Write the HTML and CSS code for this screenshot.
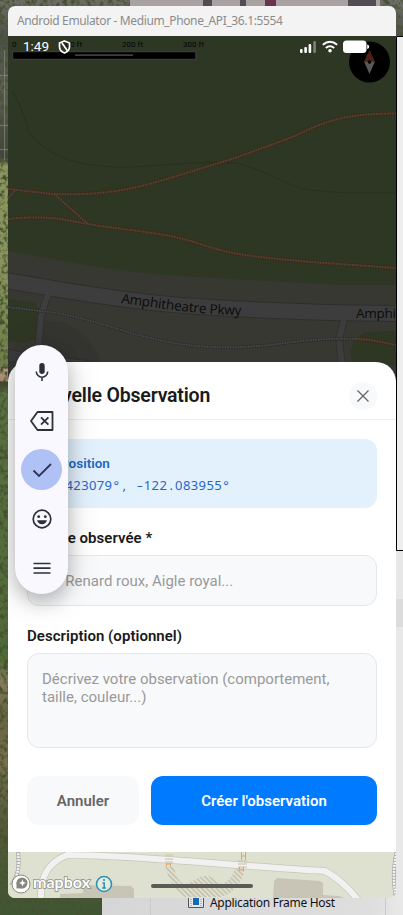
FILE: index.html
```
<!DOCTYPE html>
<html lang="fr">
<head>
<meta charset="utf-8">
<title>Nouvelle Observation</title>
<link rel="stylesheet" href="styles.css">
</head>
<body>
<div class="desktop">
  <svg class="wallpaper" width="403" height="915" viewBox="0 0 403 915" aria-hidden="true">
    <defs>
      <linearGradient id="photo" x1="0" y1="0" x2="0" y2="915" gradientUnits="userSpaceOnUse">
        <stop offset="0" stop-color="#6c6e66"/><stop offset=".04" stop-color="#4d5149"/>
        <stop offset=".1" stop-color="#5a6053"/><stop offset=".172" stop-color="#3e443a"/>
        <stop offset=".182" stop-color="#8c9660"/><stop offset=".3" stop-color="#86935a"/>
        <stop offset=".4" stop-color="#6e7d47"/><stop offset=".402" stop-color="#b89d82"/>
        <stop offset=".416" stop-color="#a5886b"/><stop offset=".418" stop-color="#353b26"/>
        <stop offset=".43" stop-color="#587040"/><stop offset=".72" stop-color="#4f6b35"/>
        <stop offset=".745" stop-color="#857c59"/><stop offset=".78" stop-color="#686440"/>
        <stop offset=".83" stop-color="#786f4d"/><stop offset=".9" stop-color="#565b38"/>
        <stop offset="1" stop-color="#3f5632"/>
      </linearGradient>
      <linearGradient id="panel" x1="102" x2="403" gradientUnits="userSpaceOnUse">
        <stop offset="0" stop-color="#d6d6d6"/><stop offset=".9" stop-color="#dedede"/><stop offset="1" stop-color="#e9e9e9"/>
      </linearGradient>
      <filter id="grass" x="0" y="0" width="100%" height="100%">
        <feTurbulence type="fractalNoise" baseFrequency=".25 .2" numOctaves="3" seed="7"/>
        <feColorMatrix values="0 0 0 0 .06  0 0 0 0 .08  0 0 0 0 .03  3.6 0 0 0 -1.6"/>
      </filter>
    </defs>
    <rect width="403" height="915" fill="url(#photo)"/>
    <rect width="403" height="915" filter="url(#grass)"/>
    <path fill="#aaa1a1" d="M130 0h250v7H130z"/>
    <path fill="#514d53" d="M203 0h9v7h-9zM240 0h6v7h-6zM348 0h28v7h-28z"/>
    <path fill="#6b344c" d="M265 0h11v7h-11z"/>
    <path stroke="#928e86" stroke-opacity=".6" d="M4.500 50v110M0 75.500h8M0 125.500h8M0 149.500h8"/>
    <path fill="#efeeef" d="M396 36h7v514h-7z"/>
    <path fill="#e7e7e7" d="M396 551h7v48h-7z"/>
    <path fill="#dcdcdc" d="M396 599h7v28h-7z"/>
    <path fill="#e8e8e8" d="M396 627h7v288h-7z"/>
    <path fill="none" stroke="#000" d="M403 36.500h-6.500v514h6.500"/>
    <path fill="url(#panel)" d="M102 890h301v25H102z"/>
    <path stroke="#c9c9c9" d="M150.500 890v25M385.500 890v25"/>
  </svg>

  <div class="task">
    <svg class="task-icon" width="16" height="14" viewBox="0 0 16 14"><path fill="#e8e8e8" stroke="#555" d="M.5.500h15v12H.5z"/><path fill="#1769b5" d="M5 1h6v9H5z"/><path stroke="#888" stroke-dasharray="1 1" d="M3 2v9M13 2v9"/></svg>
    <span>Application Frame Host</span>
  </div>

  <div class="window">
    <div class="titlebar">Android Emulator - Medium_Phone_API_36.1:5554</div>
    <div class="screen">
      <svg class="map" width="388" height="862" viewBox="8 36 388 862">
        <defs>
          <pattern id="hatch" width="3.500" height="3.500" patternUnits="userSpaceOnUse" patternTransform="rotate(-45)"><path stroke="#c3bca9" stroke-width="1.400" d="M1 0v4"/></pattern>
        </defs>
        <path fill="#2d3723" d="M8 36h388v340H8z"/>
        <path fill="#383833" d="M8 251C50 259 105 269 150 274L230 279 340 285H396V380H8z"/>
        <path fill="#2d3723" d="M8 299l27 4 5 8-2 28-18 4-12-2zM396 331l-31 1-11 9-4 11 4 14h42z"/>
        <path fill="#343430" d="M42 322q42-5 59 40H42z"/>
        <g fill="none" stroke="#283021"><path d="M12 90C25 113 25 125 31 135 50 157 73 164 113 167 150 168 195 160 236 163 267 170 290 188 310 190 345 194 370 193 396 193"/></g>
        <g fill="none" stroke="#2e2e2c" stroke-width="7.500">
          <path d="M48 294l-7 22-4 46M344 320l-5 18 3 28"/><path stroke-width="17" d="M8 281C70 291 130 302 190 306S310 313 396 313.500"/>
        </g>
        <g fill="none" stroke="#3d3d3e" stroke-width="6">
          <path d="M48 294l-7 22-4 46M344 320l-5 18 3 28"/><path stroke-width="15" d="M8 281C70 291 130 302 190 306S310 313 396 313.500"/>
        </g>
        <path fill="#3c3c3d" stroke="#2e2e2c" d="M8 349l22 5 70 8H8z"/>
        <g fill="none" stroke="#2d2d2d" stroke-width="3.200"><path d="M8 307l32 4C80 314 120 332 155 339 190 348 230 349 270 345 305 340 330 338 355 339"/></g>
        <g fill="none" stroke="#484748" stroke-width="1.800" stroke-dasharray="1.800 .8"><path d="M8 307l32 4C80 314 120 332 155 339 190 348 230 349 270 345 305 340 330 338 355 339"/></g>
        <g fill="none" stroke="#432a11" stroke-width="3.600">
          <path d="M8 189L53 194C105 196 135 188 160 181 190 172 215 164 235 158L290 138C330 119 345 114 396 113.500M8 198l8-8M54 194l34 30M8 219C25 217 45 217 60 219L88 224C130 231 165 232 200 244 235 256 260 257 310 262L396 268M355 339c15 0 25 3 41 6"/>
        </g>
        <g fill="none" stroke="#4a4343" stroke-width="2" stroke-dasharray="1.900 .8">
          <path d="M8 189L53 194C105 196 135 188 160 181 190 172 215 164 235 158L290 138C330 119 345 114 396 113.500M8 198l8-8M54 194l34 30M8 219C25 217 45 217 60 219L88 224C130 231 165 232 200 244 235 256 260 257 310 262L396 268M355 339c15 0 25 3 41 6"/>
        </g>
        <path id="pkwy" fill="none" d="M121 303C160 308 200 315 242 315"/>
        <text class="road"><textPath href="#pkwy" textLength="121">Amphitheatre Pkwy</textPath></text>
        <text class="road" x="356" y="318" textLength="40">Amphi</text>

        <path fill="#dfe1d0" d="M8 850h388v48H8z"/>
        <path fill="#c9c5b6" d="M60 898v-4l23-1v-8l48 1 3 3v9zM273 898l1-17 3-3 43 3 3 2v12l16 1 8 3z"/>
        <path fill="url(#hatch)" d="M165 866l9 1c2 10 5 15 11 18l17-9h7l13 8c8-4 12-9 13-17h10c-2 15-10 25-24 30h-36c-10-7-17-18-20-31z"/>
        <path fill="none" stroke="#c7c6b5" stroke-width="7.500" d="M41 902c-1-22 4-38 26-47C140 855 230 866 325 871 340 879 350 889 361 904"/>
        <path fill="none" stroke="#f1f1f2" stroke-width="6" d="M41 902c-1-22 4-38 26-47C140 855 230 866 325 871 340 879 350 889 361 904"/>
        <g stroke="#c8bea3" stroke-width="1"><path d="M165 855h8M165 859h8M165 862h8M238 861h9M238 864h9M238 867h9"/></g>
        <g fill="none" stroke="#e6a55c" stroke-width="1"><path d="M241.500 852v8M245.500 852v8M241 856h5M239.500 867v4M243.500 867v4M239 870h5M166.500 863v3M170.500 863v3M166 864h5"/></g>
        <g fill="none" stroke="#a9a9aa" stroke-width="4"><path d="M18 850c1 15 2 22-7 36M397 850c-4 20-4 30-1 48"/></g>
        <g fill="none" stroke="#f7f7f8" stroke-width="2.600" stroke-dasharray="2 1"><path d="M18 850c1 15 2 22-7 36M397 850c-4 20-4 30-1 48"/></g>

        <g stroke="#88897f" stroke-width="1"><circle cx="21" cy="884" r="9" fill="#fff"/><circle cx="22" cy="883" r="5.500" fill="#85867e" stroke="none"/><path fill="#85867e" stroke="none" d="M16.500 882l0 6.500 6-.2z"/><path fill="#fff" stroke="none" d="M22.500 879.500l1 2.500 2.500 1-2.500 1-1 2.500-1-2.500-2.500-1 2.500-1z"/></g>
        <text class="mapbox" x="33" y="888" textLength="57">mapbox</text>
        <circle cx="104" cy="884" r="7.500" fill="#e5eadc" stroke="#2c94b6" stroke-width="1.600"/><path stroke="#2c94b6" stroke-width="1.600" fill="none" d="M104 879v2M102.500 883h1.700v5M102 888h4"/>

        <g class="scale"><text x="12" y="47">0</text><text x="61" y="47" textLength="21">100 ft</text><text x="122" y="47" textLength="21">200 ft</text><text x="183" y="47" textLength="21">300 ft</text></g>
        <path fill="#000" stroke="#3b3b3b" stroke-width="1.500" d="M12.500 51.500h183.500v8H12.500z"/><path stroke="#3f3f3f" stroke-width="1.800" d="M75 55.200h58"/>
        <circle cx="369.500" cy="62" r="20.500" fill="#000"/>
        <path fill="#4f2015" d="M369.500 50l5.500 11.500h-11z"/><path fill="#585858" d="M369.500 74l5.500-12.500h-11z"/><circle cx="369.500" cy="62" r="1.800"/>
      </svg>

      <div class="statusbar">
        <span class="clock">1:49</span>
        <svg width="13" height="14" viewBox="0 0 13 14" fill="none" stroke="#fff" stroke-width="1.700"><path d="M6.500 1L11.500 3v3.800c0 2.700-2 5-5 6.200-3-1.200-5-3.500-5-6.200V3z"/><path d="M4 3l5.200 7.500" /></svg>
        <svg class="signals" width="70" height="14" viewBox="0 0 70 14">
          <g fill="#fff"><rect y="9" width="2.600" height="4" rx="1"/><rect x="4.300" y="7" width="2.600" height="6" rx="1"/><rect x="8.600" y="4" width="2.600" height="9" rx="1"/><rect x="13.300" y="1" width="2.600" height="12" rx="1" opacity=".38"/><circle cx="30" cy="10.800" r="1.800"/><rect x="43" y=".5" width="23.500" height="12.500" rx="3.500"/><path d="M67.200 4.500q2 .5 2 2.200t-2 2.300z"/></g>
          <path fill="none" stroke="#fff" stroke-width="2" d="M22.800 4.800q7.200-6 14.400 0M25.800 8q4.200-3.500 8.400 0"/>
        </svg>
      </div>

      <section class="sheet">
        <header class="sheet-head">
          <h1>Nouvelle Observation</h1>
          <button class="close" aria-label="Fermer"><svg width="12" height="12" viewBox="0 0 12 12" stroke="#666" stroke-width="1.300"><path d="M.5.500l11 11M11.500.500l-11 11"/></svg></button>
        </header>
        <div class="form">
          <div class="location">
            <div class="location-title"><svg width="14" height="14" viewBox="0 0 14 14"><path fill="#d33" d="M7 1a4 4 0 0 1 4 4c0 3-4 8-4 8S3 8 3 5a4 4 0 0 1 4-4z"/></svg><span>Position</span></div>
            <div class="coords">37<i>.</i>423079<i>°</i><i>,</i><i> </i><i class="minus">-</i>122<i>.</i>083955<i>°</i></div>
          </div>
          <label class="label species">Espèce observée *</label>
          <div class="field">Ex: Renard roux, Aigle royal...</div>
          <label class="label">Description (optionnel)</label>
          <div class="field area">Décrivez votre observation (comportement, taille, couleur...)</div>
          <div class="actions"><button class="cancel">Annuler</button><button class="create">Créer l'observation</button></div>
        </div>
      </section>

      <div class="navbar"></div>

      <div class="toolbar">
        <div class="tool"><svg width="24" height="24" viewBox="0 0 24 24"><rect x="9.300" y="3" width="5.400" height="11" rx="2.700" fill="#2c3038"/><path fill="none" stroke="#2c3038" stroke-width="1.600" d="M6.300 11.500a5.700 5.700 0 0 0 11.400 0M12 17.200V21"/></svg></div>
        <div class="tool"><svg width="26" height="24" viewBox="0 0 26 24" fill="none" stroke="#2c3038" stroke-width="1.800"><path stroke-linejoin="round" d="M8.500 3H23.500v18H8.500L2 12z"/><path d="M12 8.300l7.400 7.400M19.400 8.300L12 15.700"/></svg></div>
        <div class="tool active"><svg width="24" height="24" viewBox="0 0 24 24" fill="none" stroke="#2d3650" stroke-width="1.800"><path d="M3.500 12.500l5.500 5.500L21 6"/></svg></div>
        <div class="tool"><svg width="24" height="24" viewBox="0 0 24 24"><circle cx="12" cy="12" r="8.800" fill="none" stroke="#2c3038" stroke-width="1.700"/><circle cx="8.700" cy="9.700" r="1.400" fill="#2c3038"/><circle cx="15.300" cy="9.700" r="1.400" fill="#2c3038"/><path fill="#2c3038" d="M7 13.300h10q-1.300 4-5 4t-5-4z"/></svg></div>
        <div class="tool"><svg width="24" height="24" viewBox="0 0 24 24" stroke="#2c3038" stroke-width="1.700"><path d="M3.500 7.500h17M3.500 12.200h17M3.500 17h17"/></svg></div>
      </div>
    </div>
  </div>
</div>
</body>
</html>
```
FILE: styles.css
```
* { box-sizing: border-box; }
body { margin: 0; font-family: Roboto, sans-serif; }
button { border: 0; padding: 0; font: inherit; }
.desktop { position: relative; width: 403px; height: 915px; overflow: hidden; padding: 6px 7px 17px 8px; }
.wallpaper { position: absolute; inset: 0; display: block; }
.task { position: absolute; left: 188px; top: 895px; display: flex; gap: 6px; font: 12px/16px "Noto Sans", sans-serif; letter-spacing: -.3px; color: #111; white-space: nowrap; }
.window { position: relative; width: 388px; height: 892px; border-radius: 7px; overflow: hidden; background: #f3f3f3; }
.desktop::before { content: ""; position: absolute; left: 8px; top: 6px; width: 388px; height: 892px; border-radius: 7px; box-shadow: 0 0 1px 1px rgba(0,0,0,.3), 0 3px 12px rgba(0,0,0,.22); }
.titlebar { height: 30px; padding-left: 9px; font: 12px/30px "Noto Sans", sans-serif; letter-spacing: -.37px; color: #8b8b8b; white-space: nowrap; }
.screen { position: relative; display: flex; flex-direction: column; height: 862px; }
.map { position: absolute; inset: 0; display: block; }
.road { font: 13.5px "Open Sans", sans-serif; fill: #0b0b0b; }
.scale text { font: 8px Roboto, sans-serif; fill: #050505; }
.mapbox { font: 700 16px Lato, sans-serif; fill: #fff; stroke: #8d8e85; stroke-width: 1.6px; paint-order: stroke; }
.statusbar { position: relative; display: flex; align-items: center; height: 22px; padding: 0 17px 0 15px; color: #fff; }
.clock { width: 35px; font-size: 13.5px; line-height: 18px; padding-bottom: 2px; }
.signals { margin-left: auto; margin-right: 9px; }
.sheet { position: relative; display: flex; flex-direction: column; height: 490px; margin-top: 304px; background: #fff; border-radius: 20px 20px 0 0; }
.sheet-head { display: flex; flex: none; align-items: center; justify-content: space-between; height: 58px; padding: 10px 19px 0; border-bottom: 1px solid #eee; }
h1 { margin: 0; padding-top: 1px; font-size: 19.5px; line-height: 28px; font-weight: 600; letter-spacing: -.2px; color: #1a1a1a; white-space: nowrap; }
.close { display: grid; place-items: center; width: 28px; height: 28px; border-radius: 50%; background: #f8f9fa; }
.form { display: flex; flex-direction: column; padding: 19px 19px 27px; }
.location { height: 69px; padding: 16px 15px; border-radius: 12px; background: #e3f1fd; color: #1e68c8; }
.location-title { display: flex; align-items: center; gap: 4px; font-size: 13.500px; font-weight: 600; line-height: 16px; }
.coords { margin-top: 5px; font: 13px/18px "Noto Sans", sans-serif; letter-spacing: .39px; white-space: nowrap; }
.coords i { display: inline-block; width: 7.83px; font-style: normal; letter-spacing: 0; text-align: center; }
.coords .minus { transform: scaleX(1.5); }
.label { margin-top: 21px; font-size: 15px; line-height: 18px; font-weight: 600; letter-spacing: .04px; color: #1a1a1a; }
.field { height: 51px; margin-top: 8px; padding: 16px 14px; border: 1px solid #e4e7ea; border-radius: 12px; background: #f8f9fb; color: #999; font-size: 15px; line-height: 18px; }
.area { height: 95px; }
.actions { display: flex; gap: 12px; margin-top: 28px; }
.actions button { height: 49px; border-radius: 12px; font-size: 15px; font-weight: 600; }
.actions .cancel { width: 112px; background: #f8f9fb; color: #666; }
.actions .create { flex: 1; background: #007aff; color: #fff; }
.navbar { position: relative; width: 102px; height: 4px; margin: 32px auto 0; border-radius: 2px; background: #5b5b56; }
.toolbar { position: absolute; left: 7px; top: 309px; display: flex; flex-direction: column; align-items: center; gap: 8px; width: 53px; height: 249px; padding: 6px 0; border-radius: 27px; background: #faf8ff; box-shadow: 0 8px 18px rgba(0,0,0,.2), 0 4px 34px rgba(0,0,0,.16); }
.tool { display: grid; place-items: center; width: 41px; height: 41px; border-radius: 50%; }
.active { background: #b0c1f5; }
```
